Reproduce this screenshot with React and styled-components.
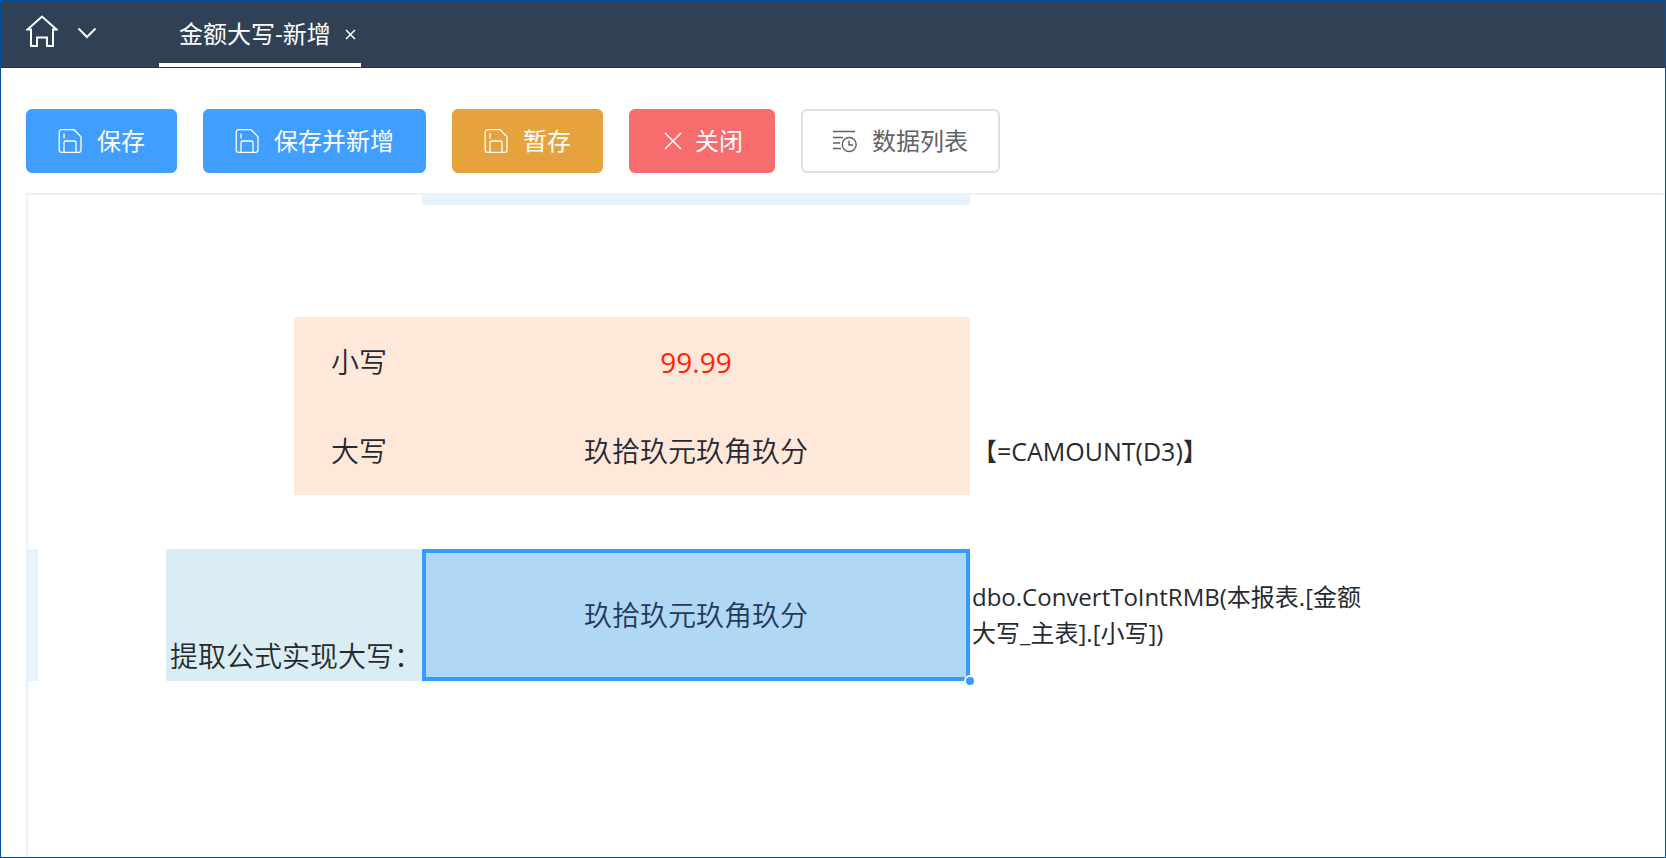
import React from 'react'
import styled, { createGlobalStyle, css } from 'styled-components'

const GlobalStyle = createGlobalStyle`
  * {
    box-sizing: border-box;
  }

  body {
    margin: 0;
    background: #fff;
    font-family: "Open Sans", "Noto Sans CJK SC", sans-serif;
    text-spacing-trim: space-all;
  }

  button {
    font-family: inherit;
    cursor: pointer;
  }
`

const Page = styled.div`
  min-height: 100vh;
  display: flex;
  flex-direction: column;
  border: 1px solid #00509f;
`

const Header = styled.header`
  display: flex;
  height: 67px;
  padding-left: 25px;
  background: #304156;
  border-bottom: 1px solid #263445;
`

const HomeNav = styled.nav`
  width: 133px;
  display: flex;
  gap: 19px;
  padding-top: 12px;
`

const HeaderButton = styled.button`
  display: flex;
  align-items: center;
  height: 36px;
  padding: 0;
  border: none;
  background: none;
  color: #fff;
`

const Tab = styled.div`
  display: flex;
  align-items: center;
  gap: 14px;
  padding: 4px 5px 0 20px;
  border-bottom: 4px solid #fff;
  color: #fff;
`

const TabLink = styled.a`
  color: inherit;
  font-size: 24px;
  line-height: 36px;
  text-decoration: none;
`

const Toolbar = styled.div`
  display: flex;
  align-items: center;
  flex-wrap: wrap;
  gap: 26px;
  padding: 41px 25px 20px;
`

const variants = {
  primary: css`
    background: #409eff;
    border-color: #409eff;
  `,
  warning: css`
    background: #e6a23c;
    border-color: #e6a23c;
  `,
  danger: css`
    gap: 10px;
    background: #f76c6c;
    border-color: #f76c6c;
  `,
  plain: css`
    color: #606266;
    background: #fff;
    border-color: #dcdfe6;
  `
}

const Button = styled.button`
  display: flex;
  align-items: center;
  gap: 15px;
  height: 64px;
  padding: 0 30px;
  border: 2px solid;
  border-radius: 6px;
  color: #fff;
  font-size: 24px;
  line-height: 36px;
  ${props => variants[props.$variant]}
`

const Sheet = styled.main`
  flex: 1;
  margin-left: 25px;
  border-top: 2px solid #e9f1fa;
  border-left: 2px solid #e9f1fa;
`

const Grid = styled.table`
  width: 1358px;
  table-layout: fixed;
  border-collapse: collapse;
  color: #262a30;
`

const Column = styled.col`
  width: ${props => props.$width}px;
`

const Row = styled.tr`
  height: ${props => props.$height}px;
`

const Rail = styled.td`
  padding: 0;
  background: ${props => props.$active ? '#e6f2fc' : 'none'};
`

const Cell = styled.td`
  padding: 0;
  text-align: center;
  vertical-align: middle;
  font-size: 28px;
  font-weight: ${props => props.$red ? 400 : 350};
  line-height: 42px;
  color: ${props => props.$red ? '#ff2200' : 'inherit'};
  background: ${props => props.$fill || 'none'};
`

const Label = styled.th`
  padding: ${props => props.$bottom ? '0 0 4px 4px' : '0 0 0 2px'};
  text-align: ${props => props.$bottom ? 'left' : 'center'};
  vertical-align: ${props => props.$bottom ? 'bottom' : 'middle'};
  font-size: 28px;
  font-weight: 350;
  line-height: 42px;
  white-space: nowrap;
  background: ${props => props.$fill};
`

const SelectedCell = styled(Cell)`
  position: relative;
  color: #1f3a5c;
  background: #b0d8f5;
  box-shadow: inset 0 0 0 4px #359bff;
`

const FillHandle = styled.span`
  position: absolute;
  right: -6px;
  bottom: -6px;
  width: 12px;
  height: 12px;
  border: 2px solid #fff;
  border-radius: 50%;
  background: #359bff;
`

const Note = styled.td`
  padding: 0 16px 0 2px;
  font-size: ${props => props.$large ? 25 : 24}px;
  line-height: 36px;
`

const PEACH = '#ffe8da'
const TEAL = '#d9edf2'

const HomeIcon = () => (
  <svg width="32" height="32" viewBox="0 0 32 32" fill="none" stroke="currentColor" strokeWidth="2" aria-hidden="true">
    <path d="M1.500 14.500 16 1.500l14.500 13H27V31h-6v-8.500H11V31H5V14.500z" />
  </svg>
)

const ChevronIcon = () => (
  <svg width="20" height="16" viewBox="0 0 20 16" fill="none" stroke="currentColor" strokeWidth="2" aria-hidden="true">
    <path d="m1.500 5.500 8.500 8.500 8.500-8.500" />
  </svg>
)

const CrossIcon = ({ size, width, pad }) => (
  <svg width={size} height={size} viewBox={`0 0 ${size} ${size}`} stroke="currentColor" strokeWidth={width} aria-hidden="true">
    <path d={`M${pad} ${pad}L${size - pad} ${size - pad}M${size - pad} ${pad}L${pad} ${size - pad}`} />
  </svg>
)

const SaveIcon = () => (
  <svg width="24" height="24" viewBox="0 0 24 24" fill="none" stroke="currentColor" strokeWidth="1.300" aria-hidden="true">
    <path d="M3.500 .7H16l7 7V21a2.300 2.300 0 0 1-2.300 2.300H3.500A2.300 2.300 0 0 1 1.200 21V3A2.300 2.300 0 0 1 3.500 .7z" />
    <path d="M6 23v-9.500a1.500 1.500 0 0 1 1.500-1.500h9a1.500 1.500 0 0 1 1.500 1.500V23M6 4.500v5" />
  </svg>
)

const ListIcon = () => (
  <svg width="24" height="24" viewBox="0 0 24 24" fill="none" stroke="currentColor" strokeWidth="1.400" aria-hidden="true">
    <path d="M0 2.500h22M0 8.500h10M0 14h7M0 19.500h8M16 11.500V16h4" />
    <circle cx="16.200" cy="15.500" r="7" />
  </svg>
)

const App = () => (
  <Page>
    <GlobalStyle />
    <Header>
      <HomeNav>
        <HeaderButton aria-label="首页"><HomeIcon /></HeaderButton>
        <HeaderButton aria-label="展开"><ChevronIcon /></HeaderButton>
      </HomeNav>
      <Tab>
        <TabLink href="#new">金额大写-新增</TabLink>
        <HeaderButton aria-label="关闭标签"><CrossIcon size={11} width={1.5} pad={1} /></HeaderButton>
      </Tab>
    </Header>
    <Toolbar>
      <Button $variant="primary"><SaveIcon />保存</Button>
      <Button $variant="primary"><SaveIcon />保存并新增</Button>
      <Button $variant="warning"><SaveIcon />暂存</Button>
      <Button $variant="danger"><CrossIcon size={24} width={1.5} pad={4} />关闭</Button>
      <Button $variant="plain"><ListIcon />数据列表</Button>
    </Toolbar>
    <Sheet>
      <Grid>
        <colgroup>
          <Column $width={10} />
          <Column $width={128} />
          <Column $width={128} />
          <Column $width={128} />
          <Column $width={548} />
          <Column $width={416} />
        </colgroup>
        <tbody>
          <Row $height={10}>
            <Rail colSpan={4} />
            <Rail $active />
            <Rail />
          </Row>
          <Row $height={112}>
            <Rail colSpan={6} />
          </Row>
          <Row $height={89}>
            <Rail colSpan={3} />
            <Label scope="row" $fill={PEACH}>小写</Label>
            <Cell $fill={PEACH} $red>99.99</Cell>
            <Note />
          </Row>
          <Row $height={89}>
            <Rail colSpan={3} />
            <Label scope="row" $fill={PEACH}>大写</Label>
            <Cell $fill={PEACH}>玖拾玖元玖角玖分</Cell>
            <Note $large>【=CAMOUNT(D3)】</Note>
          </Row>
          <Row $height={54}>
            <Rail colSpan={6} />
          </Row>
          <Row $height={132}>
            <Rail $active />
            <Rail />
            <Label scope="row" colSpan={2} $bottom $fill={TEAL}>提取公式实现大写：</Label>
            <SelectedCell>
              玖拾玖元玖角玖分
              <FillHandle />
            </SelectedCell>
            <Note>dbo.ConvertToIntRMB(本报表.[金额大写_主表].[小写])</Note>
          </Row>
        </tbody>
      </Grid>
    </Sheet>
  </Page>
)

export default App
